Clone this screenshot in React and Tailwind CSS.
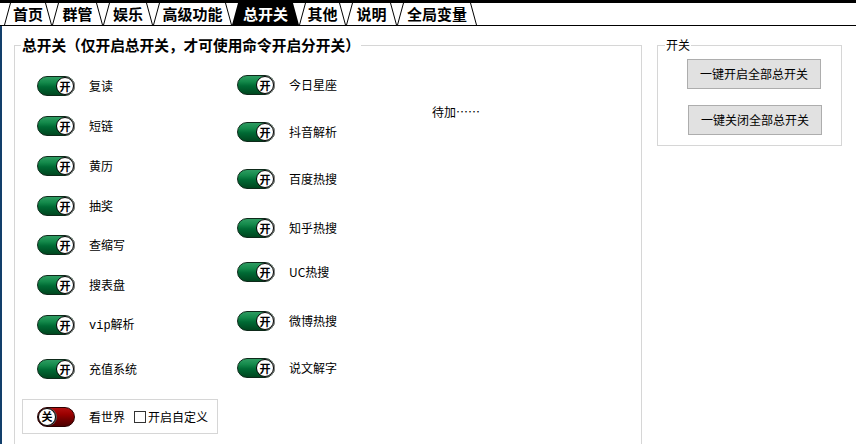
import React from "react";

const tabs = [
  { t: "首页", w: 48, cls: "w-[48px]" },
  { t: "群管", w: 51, cls: "w-[51px]" },
  { t: "娱乐", w: 50, cls: "w-[50px]" },
  { t: "高级功能", w: 79, cls: "w-[79px]" },
  { t: "总开关", w: 67, cls: "w-[67px]", active: true },
  { t: "其他", w: 47, cls: "w-[47px]" },
  { t: "说明", w: 51, cls: "w-[51px]" },
  { t: "全局变量", w: 80, cls: "w-[80px]" },
];

function Tab({ t, w, cls, active }) {
  return (
    <div className={"relative h-[22px] flex items-center justify-center shrink-0 " + cls}>
      <svg className="absolute inset-0" width={w} height="22" viewBox={`0 0 ${w} 22`}>
        {active ? (
          <polygon points={`0,22 6,0 ${w - 6},0 ${w},22`} fill="#000" />
        ) : (
          <path d={`M0.5 22 L6.5 0 M${w - 6.5} 0 L${w - 0.5} 22`} stroke="#000" strokeWidth="1" fill="none" />
        )}
      </svg>
      <span className={"relative text-[15px] font-bold leading-[22px] " + (active ? "text-white" : "text-black")}>{t}</span>
    </div>
  );
}

function Toggle({ on }) {
  return (
    <div
      className={
        "relative w-[38px] h-[20px] shrink-0 rounded-full border " +
        (on
          ? "border-[#0e2a1a] bg-[linear-gradient(to_bottom,#2f9c62_0%,#148a4b_30%,#006a34_55%,#00461f_100%)]"
          : "border-[#2a0000] bg-[linear-gradient(to_bottom,#b21010_0%,#9a0000_35%,#780000_60%,#4e0000_100%)]")
      }
    >
      <div
        className={
          "absolute top-0 w-[18px] h-[18px] rounded-full bg-white border border-black flex items-center justify-center text-[11px] font-bold leading-none text-black " +
          (on ? "right-0 shadow-[1px_0_0_#8a8a8a]" : "left-0 shadow-[1px_0_0_#5a5a5a]")
        }
      >
        {on ? "开" : "关"}
      </div>
    </div>
  );
}

function Row({ label, mt }) {
  return (
    <div className={"flex items-center " + mt}>
      <Toggle on />
      <span className="ml-[14px] text-[12px] leading-[16px] text-black">{label}</span>
    </div>
  );
}

const col1 = [
  ["复读", "mt-[21px]"],
  ["短链", "mt-[20px]"],
  ["黄历", "mt-[20px]"],
  ["抽奖", "mt-[20px]"],
  ["查缩写", "mt-[19px]"],
  ["搜表盘", "mt-[20px]"],
  [
    <>
      <span className="font-['Liberation_Mono',monospace] text-[12px]">vip</span>解析
    </>,
    "mt-[20px]",
  ],
  ["充值系统", "mt-[24px]"],
];

const col2 = [
  ["今日星座", "mt-[20px]"],
  ["抖音解析", "mt-[27px]"],
  ["百度热搜", "mt-[27px]"],
  ["知乎热搜", "mt-[29px]"],
  ["UC热搜", "mt-[24px]"],
  ["微博热搜", "mt-[29px]"],
  ["说文解字", "mt-[27px]"],
];

export default function App() {
  return (
    <div className="w-[856px] h-[444px] overflow-hidden bg-white text-black font-['Noto_Sans_CJK_SC','Noto_Sans',sans-serif]">
      <div className="h-[3px] bg-black" />
      <div className="flex h-[23px] border-b border-black pl-[4px]">
        {tabs.map((tb, i) => (
          <Tab key={i} {...tb} />
        ))}
      </div>
      <div className="flex h-[418px] border-l-2 border-[#123f6b]">
        <fieldset className="ml-[12px] mt-[9px] w-[628px] h-[440px] shrink-0 border border-[#d6d6d6]">
          <legend className="ml-[6px] px-[1px] text-[14.7px] font-bold leading-[20px]">
            总开关（仅开启总开关，才可使用命令开启分开关）
          </legend>
          <div className="flex pl-[22px]">
            <div className="flex flex-col w-[200px]">
              {col1.map(([l, m], i) => (
                <Row key={i} label={l} mt={m} />
              ))}
            </div>
            <div className="flex flex-col w-[195px]">
              {col2.map(([l, m], i) => (
                <Row key={i} label={l} mt={m} />
              ))}
            </div>
            <div className="mt-[49px] text-[12px] leading-[16px]">待加……</div>
          </div>
          <div className="ml-[7px] mt-[20px] w-[196px] h-[35px] border border-[#d6d6d6] flex items-center pl-[14px]">
            <Toggle on={false} />
            <span className="ml-[14px] text-[12px] leading-[16px]">看世界</span>
            <span className="ml-[9px] w-[12px] h-[12px] border border-[#333] bg-white shrink-0" />
            <span className="ml-[2px] text-[12px] leading-[16px]">开启自定义</span>
          </div>
        </fieldset>
        <fieldset className="ml-[15px] mt-[11px] w-[185px] h-[109px] shrink-0 border border-[#d6d6d6]">
          <legend className="ml-[7px] px-[1px] text-[12px] leading-[16px]">开关</legend>
          <div className="flex flex-col pl-[29px]">
            <button className="mt-[6px] w-[134px] h-[30px] bg-[#e1e1e1] border border-[#adadad] text-[12px] text-black">
              一键开启全部总开关
            </button>
            <button className="ml-[1px] mt-[16px] w-[134px] h-[30px] bg-[#e1e1e1] border border-[#adadad] text-[12px] text-black">
              一键关闭全部总开关
            </button>
          </div>
        </fieldset>
      </div>
    </div>
  );
}
